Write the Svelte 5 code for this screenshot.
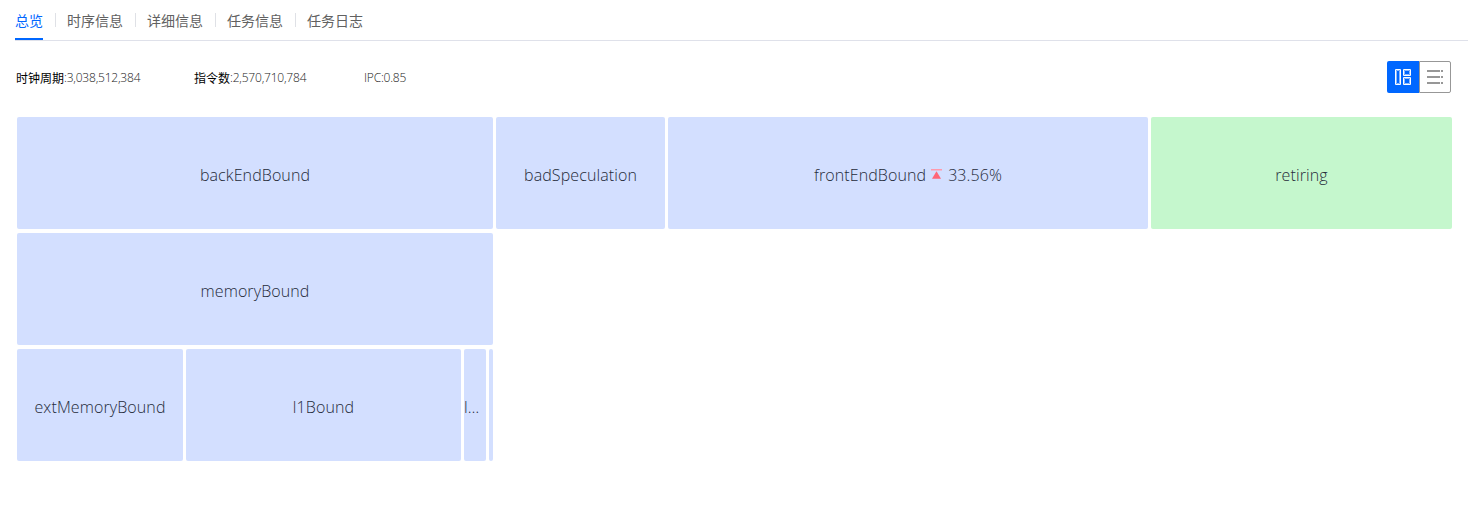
<script>
  const tabs = ['总览', '时序信息', '详细信息', '任务信息', '任务日志'];
  const rows = [
    [
      { name: 'backEndBound', width: 476 },
      { name: 'badSpeculation', width: 169 },
      { name: 'frontEndBound', width: 480, value: '33.56%' },
      { name: 'retiring', width: 301, good: true }
    ],
    [{ name: 'memoryBound', width: 476 }],
    [
      { name: 'extMemoryBound', width: 166 },
      { name: 'l1Bound', width: 275 },
      { name: 'l…', width: 22, clipped: true },
      { name: '', width: 4 }
    ]
  ];
</script>

<nav>
  {#each tabs as tab, i}
    <button class="tab" class:active={i === 0}>{tab}</button>
  {/each}
</nav>

<section class="summary">
  <div class="stat cycles"><b>时钟周期</b><span>:3,038,512,384</span></div>
  <div class="stat instr"><b>指令数</b><span>:2,570,710,784</span></div>
  <div class="stat ipc"><span>IPC:0.85</span></div>
  <div class="switch">
    <button class="on" aria-label="treemap">
      <svg width="16" height="16" viewBox="0 0 16 16" fill="none">
        <path d="M1.5 1.5h3v13h-3zM9.5 1.5h5v4h-5zM9.5 9.5h5v5h-5z" stroke="#8dbaff" />
        <path d="M.5.5h5v15h-5zM8.5.5h7v6h-7zM8.5 8.5h7v7h-7z" stroke="#fff" />
      </svg>
    </button>
    <button class="off" aria-label="list">
      <svg width="16" height="14" viewBox="0 0 16 14" fill="#979797">
        <path d="M0 0h13v2H0zM14 0h2v2h-2zM0 6h13v2H0zM14 6h2v2h-2zM0 12h13v2H0zM14 12h2v2h-2z" />
      </svg>
    </button>
  </div>
</section>

<main>
  {#each rows as row}
    <div class="row">
      {#each row as cell}
        <div class="cell" class:good={cell.good} class:clipped={cell.clipped} style:width="{cell.width}px">
          <span class="name">{cell.name}</span>
          {#if cell.value}
            <svg width="11" height="11" viewBox="0 0 11 11">
              <path d="M0 0h11v1.4H0z" fill="#ff9aac" />
              <path d="M5.5 2.3 10 9.8H1z" fill="#ff6678" />
            </svg>
            <span class="value">{cell.value}</span>
          {/if}
        </div>
      {/each}
    </div>
  {/each}
</main>

<style>
  :global(body) {
    background: #fff;
    font-family: 'Open Sans', 'Noto Sans CJK SC', sans-serif;
  }
  button {
    margin: 0;
    padding: 0;
    border: 0;
    background: none;
    font: inherit;
  }
  nav {
    display: flex;
    margin: 0 6px 0 15px;
    height: 40px;
    border-bottom: 1px solid #dfe1ea;
  }
  .tab {
    display: flex;
    height: 40px;
    box-sizing: border-box;
    padding-top: 2px;
    align-items: center;
    font: 14px/36px 'Noto Sans CJK SC', sans-serif;
    color: #616161;
    border-bottom: 2px solid transparent;
  }
  .tab.active {
    color: #0067ff;
    border-bottom-color: #0067ff;
  }
  .tab + .tab::before {
    content: '';
    width: 1px;
    height: 14px;
    margin: 0 11px 0 12px;
    background: #dfe1e6;
  }
  .summary {
    display: flex;
    align-items: center;
    height: 32px;
    padding: 20px 23px 24px 16px;
  }
  .stat {
    display: flex;
    padding-top: 2px;
    font-size: 12px;
    line-height: 16px;
    white-space: nowrap;
    color: #222;
    font-weight: 300;
  }
  .stat b {
    font: 12px/16px 'Noto Sans CJK SC', sans-serif;
    color: #000;
  }
  .stat span {
    letter-spacing: -0.2px;
  }
  .cycles {
    width: 178px;
  }
  .instr {
    width: 170px;
  }
  .switch {
    display: flex;
    margin-left: auto;
  }
  .switch button {
    display: grid;
    place-items: center;
    width: 32px;
    height: 32px;
    box-sizing: border-box;
  }
  .on {
    background: #0067ff;
    border-radius: 2px 0 0 2px;
  }
  .switch .off {
    border: 1px solid #979797;
    border-radius: 0 2px 2px 0;
  }
  main {
    display: flex;
    flex-direction: column;
    gap: 4px;
    padding-left: 17px;
  }
  .row {
    display: flex;
    gap: 3px;
  }
  .cell {
    display: flex;
    flex: none;
    align-items: center;
    justify-content: center;
    height: 112px;
    padding-top: 4px;
    box-sizing: border-box;
    border-radius: 2px;
    overflow: hidden;
    background: #d3dfff;
    color: #252b3a;
    font-size: 16px;
    font-weight: 300;
    line-height: 22px;
    letter-spacing: 0.1px;
  }
  .cell.good {
    background: #c5f7cd;
  }
  .cell.clipped {
    justify-content: flex-start;
  }
  .cell svg {
    margin: 0 6px 1px 5px;
  }
</style>
